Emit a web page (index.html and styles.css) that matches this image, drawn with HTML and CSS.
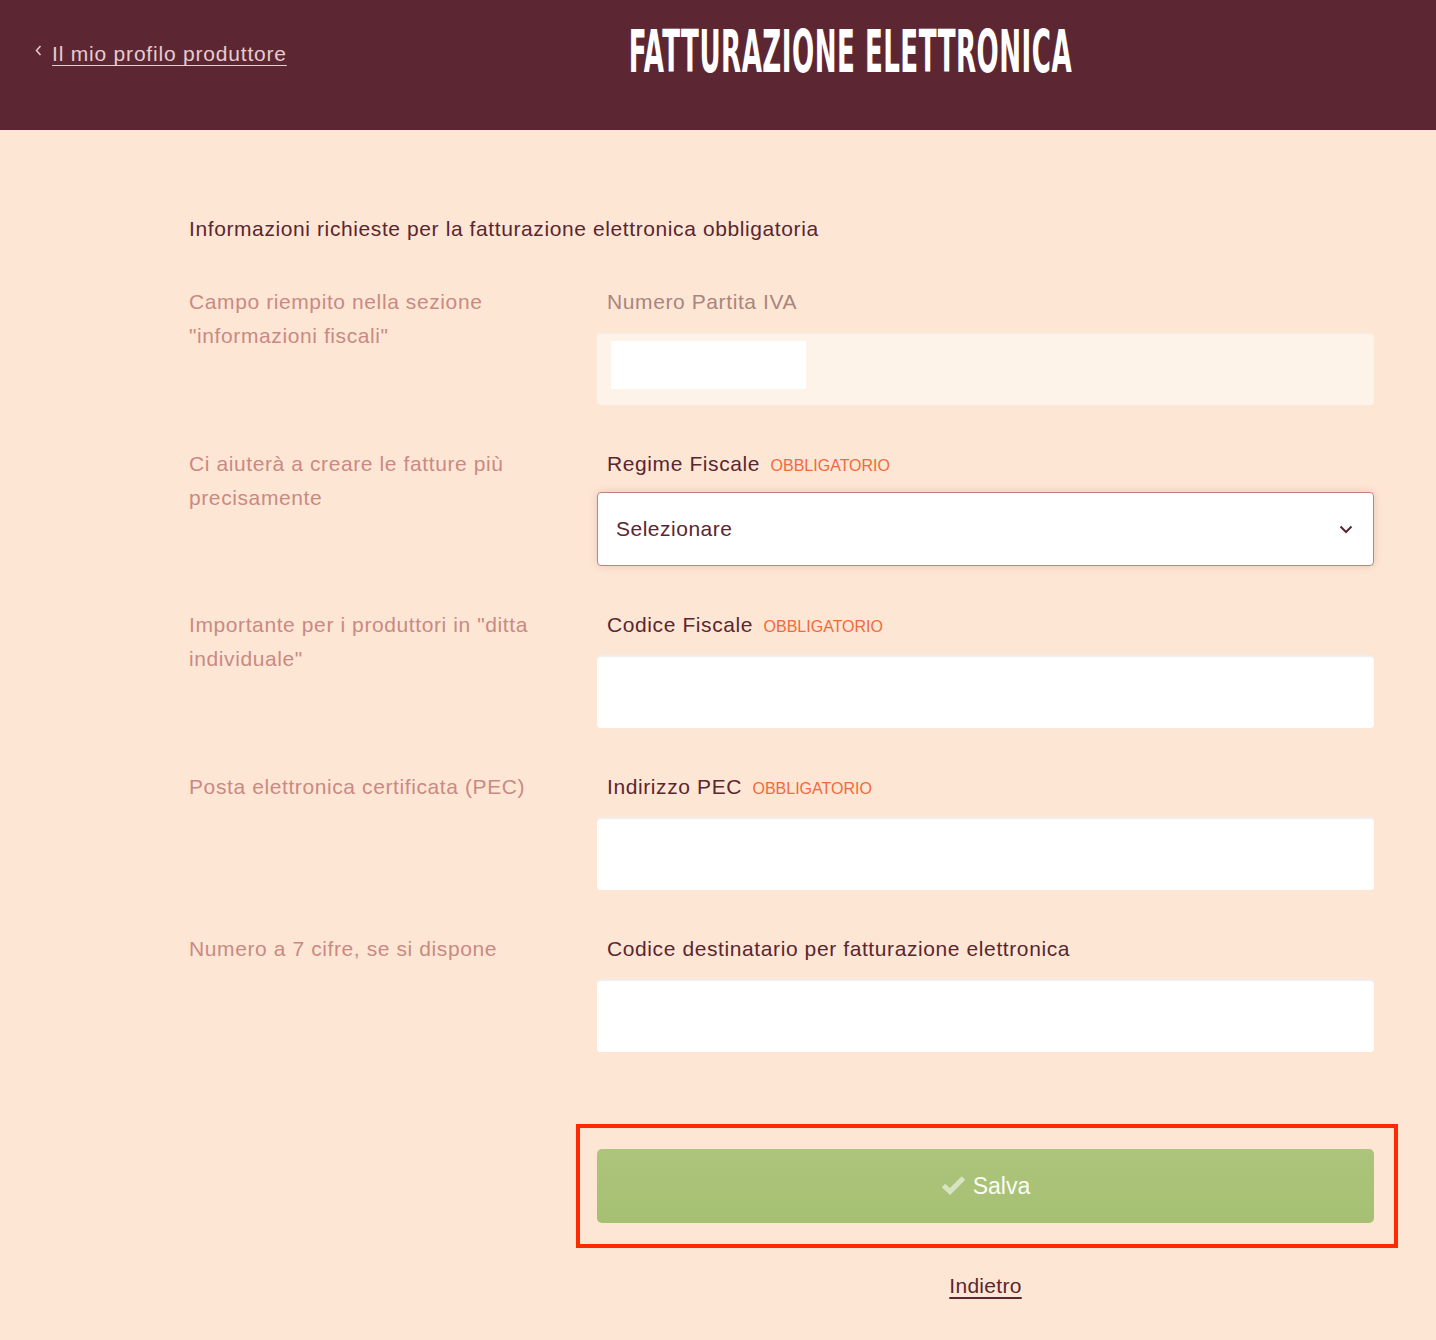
FILE: index.html
```html
<!DOCTYPE html>
<html lang="it">
<head>
    <meta charset="UTF-8">
    <meta name="viewport" content="width=device-width, initial-scale=1.0">
    <title>Fatturazione elettronica</title>
    <link rel="stylesheet" href="styles.css">
</head>
<body>
    <header class="topbar">
        <a class="back-link" href="#">
            <svg class="back-arrow" width="7" height="11" viewBox="0 0 7 11"><polyline points="5.5,1 1.5,5.5 5.5,10" fill="none" stroke="currentColor" stroke-width="1.5"/></svg>
            <span>Il mio profilo produttore</span>
        </a>
        <h1 class="page-title"><span>FATTURAZIONE ELETTRONICA</span></h1>
    </header>

    <main class="content">
        <p class="intro">Informazioni richieste per la fatturazione elettronica obbligatoria</p>

        <div class="form-row">
            <div class="hint">Campo riempito nella sezione "informazioni fiscali"</div>
            <div class="field">
                <label class="field-label muted">Numero Partita IVA</label>
                <div class="input disabled"><span class="masked"></span></div>
            </div>
        </div>

        <div class="form-row">
            <div class="hint">Ci aiuterà a creare le fatture più precisamente</div>
            <div class="field">
                <label class="field-label">Regime Fiscale <span class="required">OBBLIGATORIO</span></label>
                <div class="select">
                    <span>Selezionare</span>
                    <svg width="14" height="9" viewBox="0 0 14 9"><polyline points="1.5,1.5 7,7 12.5,1.5" fill="none" stroke="currentColor" stroke-width="2"/></svg>
                </div>
            </div>
        </div>

        <div class="form-row">
            <div class="hint">Importante per i produttori in "ditta individuale"</div>
            <div class="field">
                <label class="field-label">Codice Fiscale <span class="required">OBBLIGATORIO</span></label>
                <div class="input"></div>
            </div>
        </div>

        <div class="form-row">
            <div class="hint">Posta elettronica certificata (PEC)</div>
            <div class="field">
                <label class="field-label">Indirizzo PEC <span class="required">OBBLIGATORIO</span></label>
                <div class="input"></div>
            </div>
        </div>

        <div class="form-row">
            <div class="hint">Numero a 7 cifre, se si dispone</div>
            <div class="field">
                <label class="field-label">Codice destinatario per fatturazione elettronica</label>
                <div class="input"></div>
            </div>
        </div>

        <div class="form-row actions">
            <div></div>
            <div class="action-col">
                <div class="highlight">
                    <button class="save-btn">
                        <svg width="25" height="20" viewBox="0 0 25 20"><polyline points="2.5,10.5 9,16.5 22.5,3" fill="none" stroke="currentColor" stroke-width="5" stroke-linejoin="miter"/></svg>
                        Salva
                    </button>
                </div>
                <a class="back-bottom" href="#">Indietro</a>
            </div>
        </div>
    </main>
</body>
</html>
```

FILE: styles.css
```css
body {
    margin: 0;
    padding: 0;
    font-family: "Liberation Sans", Arial, sans-serif;
    background-color: #fee6d5;
    color: #5a2630;
}

/* top bar */
.topbar {
    height: 130px;
    box-sizing: border-box;
    padding: 22px 22px 0 35px;
    background-color: #5c2732;
    display: flex;
    align-items: flex-start;
}

.back-link {
    height: 64px;
    display: flex;
    align-items: center;
    gap: 10px;
    color: #e6ccd0;
    font-size: 21px;
    letter-spacing: 0.8px;
    text-decoration: none;
}

.back-link span {
    text-decoration: underline;
    text-underline-offset: 4px;
    text-decoration-thickness: 1px;
}

.back-arrow {
    margin-top: -8px;
}

.page-title {
    flex: 1;
    margin: -2px 0 0;
    height: 64px;
    display: flex;
    align-items: center;
    justify-content: center;
    color: #fff;
}

.page-title span {
    display: inline-block;
    font-family: "DejaVu Sans", sans-serif;
    font-stretch: condensed;
    font-weight: bold;
    font-size: 58px;
    letter-spacing: 1px;
    transform: scaleX(0.5);
    white-space: nowrap;
}

/* form */
.content {
    padding: 82px 62px 0 189px;
}

.intro {
    margin: 0 0 39px;
    font-size: 21px;
    letter-spacing: 0.6px;
    line-height: 34px;
}

.form-row {
    display: grid;
    grid-template-columns: 408px 777px;
    margin-bottom: 42px;
}

.hint {
    color: #c98a83;
    font-size: 21px;
    letter-spacing: 0.6px;
    line-height: 33.5px;
    padding-right: 30px;
}

.field-label {
    display: block;
    height: 34px;
    margin: 0 0 13px 10px;
    font-size: 21px;
    letter-spacing: 0.6px;
    line-height: 34px;
    color: #5a2630;
}

.field-label.muted {
    color: #a8857e;
}

.required {
    margin-left: 4px;
    font-size: 16px;
    line-height: 1;
    letter-spacing: 0;
    color: #f26a3a;
}

.input {
    height: 73px;
    box-sizing: border-box;
    border-radius: 4px;
    background-color: #fff;
    box-shadow: inset 0 2px 1px rgba(0, 0, 0, 0.07);
}

.input.disabled {
    background-color: #fef3e9;
    padding: 9px 14px;
    box-shadow: inset 0 2px 1px rgba(210, 170, 150, 0.12);
}

.masked {
    display: block;
    width: 195px;
    height: 48px;
    background-color: #fff;
}

.select {
    height: 74px;
    box-sizing: border-box;
    margin-top: -2px;
    border: 1px solid #c67f7d;
    border-radius: 4px;
    background-color: #fff;
    box-shadow: 0 0 9px rgba(170, 110, 80, 0.25);
    display: flex;
    align-items: center;
    justify-content: space-between;
    padding: 0 20px 0 18px;
    font-size: 21px;
    letter-spacing: 0.5px;
    color: #5a2630;
}

/* actions */
.actions {
    margin-top: 72px;
    margin-bottom: 0;
}

.action-col {
    display: flex;
    flex-direction: column;
    align-items: center;
}

.highlight {
    align-self: stretch;
    margin: 0 -24px 0 -21px;
    padding: 21px 20px 21px 17px;
    border: 4px solid #ff2a00;
}

.save-btn {
    width: 100%;
    height: 74px;
    border: none;
    border-radius: 5px;
    background: linear-gradient(#acc47b, #a6c073);
    color: #fbfdf5;
    font-family: "Liberation Sans", Arial, sans-serif;
    font-size: 23px;
    display: flex;
    align-items: center;
    justify-content: center;
    gap: 7px;
}

.save-btn svg {
    color: #d7e3c1;
    margin-top: -2px;
}

.back-bottom {
    margin-top: 21px;
    font-size: 21px;
    letter-spacing: 0.3px;
    line-height: 34px;
    color: #5a2630;
    text-underline-offset: 4px;
}
```
